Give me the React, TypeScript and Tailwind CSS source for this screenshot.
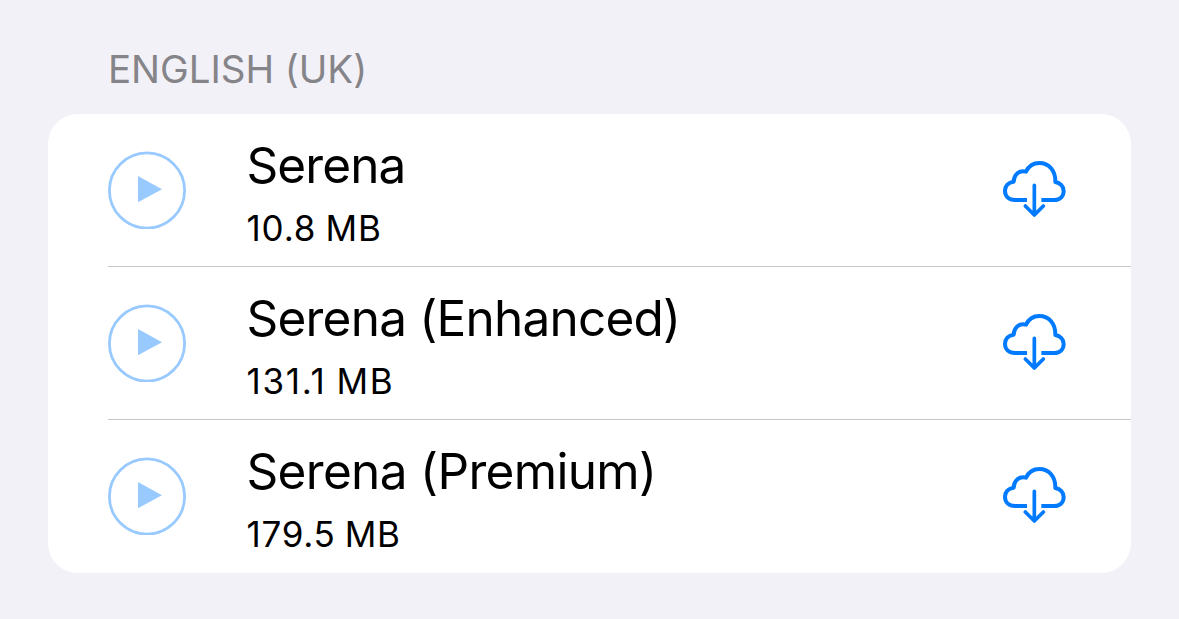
const voices = [
  { name: "Serena", size: "10.8 MB", nameTracking: "tracking-[-0.9px]", sizeTracking: "tracking-[0.85px]" },
  { name: "Serena (Enhanced)", size: "131.1 MB", nameTracking: "tracking-[-0.78px]", sizeTracking: "tracking-[1.7px]" },
  { name: "Serena (Premium)", size: "179.5 MB", nameTracking: "tracking-[-0.67px]", sizeTracking: "tracking-[0.75px]" },
];

function PlayIcon() {
  return (
    <svg width="78" height="78" viewBox="0 0 78 78" fill="none" className="shrink-0">
      <circle cx="39" cy="39.5" r="37.6" stroke="#99caff" strokeWidth="2.8" />
      <path d="M30 25.1L54 38.2L30 51.3Z" fill="#99caff" />
    </svg>
  );
}

function CloudDownloadIcon() {
  return (
    <svg width="64" height="60" viewBox="36 27 192 180" fill="none" stroke="#007aff" strokeLinecap="round" strokeLinejoin="round" className="shrink-0">
      <path
        d="M111 150H75C57 150 45 139 45 123C45 108 55 97 71 95C72 73 88 59 108 65C116 48 131 39 148 39C177 39 197 62 196 96C211 99 221 109 221 123C221 139 210 150 193 150H154"
        strokeWidth="12"
        strokeLinecap="butt"
      />
      <path d="M133 106V193M106 168L133 195L160 168" strokeWidth="11" />
    </svg>
  );
}

export default function App() {
  return (
    <main className="h-[619px] w-[1179px] overflow-hidden bg-[#f2f1f7] pl-12 font-['Inter',sans-serif] [font-feature-settings:'calt'_0]">
      <h2 className="flex h-[114px] items-start pt-[45px] pl-[60px] text-[38.5px] leading-[48px] font-normal tracking-[-0.05px] text-[#858489]">
        ENGLISH (UK)
      </h2>
      <ul className="h-[459px] w-[1083px] overflow-hidden rounded-[30px] bg-white pl-[60px] text-black">
        {voices.map((voice, i) => (
          <li
            key={voice.name}
            className={`flex h-[153px] pr-[65px] ${i < voices.length - 1 ? "border-b border-[#c6c6c8]" : ""}`}
          >
            <button aria-label="Play" className="mt-[37px] flex h-[78px]">
              <PlayIcon />
            </button>
            <div className="ml-[60.5px] flex-1 pt-[21px]">
              <div className={`text-[49.5px] leading-[60px] ${voice.nameTracking}`}>{voice.name}</div>
              <div className={`mt-[11px] text-[35px] leading-[44px] [word-spacing:-1.5px] ${voice.sizeTracking}`}>{voice.size}</div>
            </div>
            <button aria-label="Download" className="mt-[45px] flex h-[60px]">
              <CloudDownloadIcon />
            </button>
          </li>
        ))}
      </ul>
    </main>
  );
}
